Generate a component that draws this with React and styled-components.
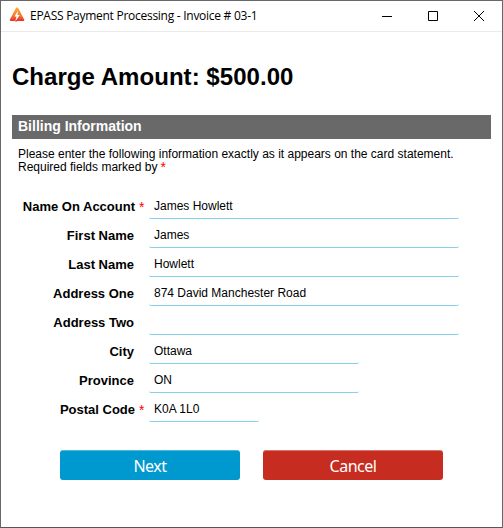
import React from "react";
import styled, { createGlobalStyle } from "styled-components";

const GlobalStyle = createGlobalStyle`
  * { box-sizing: border-box; }
  body { margin: 0; background: #fff; }
`;

const Window = styled.div`
  width: 503px;
  height: 528px;
  background: #fff;
  border: 1px solid #68686b;
  border-bottom-color: #565659;
  font-family: "Liberation Sans", Arial, sans-serif;
  color: #000;
  overflow: hidden;
`;

const TitleBar = styled.header`
  display: flex;
  align-items: center;
  height: 31px;
  padding-left: 8px;
  border-bottom: 1px solid #ebebeb;
`;

const Logo = styled.svg`
  width: 16px;
  height: 16px;
  margin: 0 5px 2px 0;
  flex: none;
`;

const Title = styled.span`
  flex: 1;
  font: 12px/16px "Open Sans", sans-serif;
  letter-spacing: -0.27px;
  white-space: nowrap;
`;

const WindowButton = styled.button`
  display: flex;
  align-items: center;
  justify-content: center;
  width: 46px;
  height: 29px;
  padding: 0;
  border: 0;
  background: transparent;
  flex: none;
`;

const Glyph = styled.svg`
  width: 10px;
  height: 10px;
  margin-bottom: 1px;
  fill: none;
  stroke: #000;
`;

const Content = styled.main`
  padding: 30px 11px 0;
`;

const Amount = styled.h1`
  margin: 0;
  font-size: 24px;
  line-height: 30px;
  font-weight: 700;
  letter-spacing: 0.04px;
  white-space: nowrap;
`;

const SectionTitle = styled.h2`
  margin: 23px 0 0;
  padding-left: 6px;
  height: 24px;
  background: #696969;
  color: #fff;
  font-size: 14px;
  line-height: 23px;
  font-weight: 700;
`;

const Intro = styled.p`
  margin: 9px 0 0;
  padding-left: 6px;
  font-size: 12px;
  line-height: 13px;
  white-space: nowrap;
`;

const RequiredNote = styled.span`
  display: flex;
  align-items: flex-start;
  gap: 3px;
  height: 13px;
`;

const Star = styled.span`
  color: #f00;
  font-size: 14px;
  line-height: 13px;
`;

const Form = styled.div`
  display: flex;
  flex-direction: column;
  gap: 5px;
  margin-top: 21px;
`;

const Row = styled.div`
  display: flex;
  height: 24px;
`;

const Label = styled.label`
  width: ${(p) => (p.$required ? "123px" : "122px")};
  font-size: 13px;
  line-height: 24px;
  font-weight: 700;
  text-align: right;
  white-space: nowrap;
`;

const Marker = styled.span`
  width: ${(p) => (p.$required ? "14px" : "15px")};
  padding-left: 4px;
  color: #f00;
  font-size: 14px;
  line-height: 24px;
`;

const Input = styled.input`
  width: ${(p) => p.$width}px;
  height: 24px;
  padding: 0 5px 2px;
  border: 0;
  border-bottom: 1px solid #84d2e8;
  border-radius: 2px;
  background: transparent;
  color: #000;
  outline: none;
  font: 12px "Liberation Sans", Arial, sans-serif;
`;

const Actions = styled.div`
  display: flex;
  gap: 23px;
  margin: 28px 0 0 48px;
`;

const ActionButton = styled.button`
  width: 180px;
  height: 30px;
  padding: 0;
  border: 0;
  border-top: 1px solid ${(p) => p.$edge};
  border-radius: 3px;
  background: ${(p) => p.$color};
  color: #fff;
  font: 16px/30px "Noto Sans", sans-serif;
  letter-spacing: -0.5px;
`;

const fields = [
  { label: "Name On Account", value: "James Howlett", width: 310, required: true },
  { label: "First Name", value: "James", width: 310 },
  { label: "Last Name", value: "Howlett", width: 310 },
  { label: "Address One", value: "874 David Manchester Road", width: 310 },
  { label: "Address Two", value: "", width: 310 },
  { label: "City", value: "Ottawa", width: 210 },
  { label: "Province", value: "ON", width: 210 },
  { label: "Postal Code", value: "K0A 1L0", width: 110, required: true },
];

export default function App() {
  return (
    <>
      <GlobalStyle />
      <Window>
        <TitleBar>
          <Logo viewBox="0 0 16 16">
            <defs>
              <linearGradient id="flame" x1="0" y1="0" x2="0" y2="1">
                <stop offset="0" stopColor="#fbb32c" />
                <stop offset="0.55" stopColor="#f57a32" />
                <stop offset="1" stopColor="#e5222c" />
              </linearGradient>
            </defs>
            <path d="M7.8 0.3 L9.4 1.2 L15.4 12.9 L14.7 14 H8.6 L6.2 15 L6.6 14 H1.4 L0.7 12.9 L6.8 1.2 Z" fill="url(#flame)" />
            <path d="M9.1 3.6 L5.5 9.5 H7.5 L6.3 14.6 L10.7 8.1 H8.4 Z" fill="#fff" />
          </Logo>
          <Title>EPASS Payment Processing - Invoice # 03-1</Title>
          <WindowButton aria-label="Minimize">
            <Glyph viewBox="0 0 10 10"><path d="M0 5.5H10" /></Glyph>
          </WindowButton>
          <WindowButton aria-label="Maximize">
            <Glyph viewBox="0 0 10 10"><path d="M.5 .5h9v9h-9z" /></Glyph>
          </WindowButton>
          <WindowButton aria-label="Close">
            <Glyph viewBox="0 0 10 10"><path d="M0 0L10 10M10 0L0 10" /></Glyph>
          </WindowButton>
        </TitleBar>
        <Content>
          <Amount>Charge Amount: $500.00</Amount>
          <SectionTitle>Billing Information</SectionTitle>
          <Intro>
            Please enter the following information exactly as it appears on the card statement.
            <RequiredNote>
              Required fields marked by <Star>*</Star>
            </RequiredNote>
          </Intro>
          <Form>
            {fields.map((f) => (
              <Row key={f.label}>
                <Label $required={f.required}>{f.label}</Label>
                <Marker $required={f.required}>{f.required ? "*" : ""}</Marker>
                <Input aria-label={f.label} defaultValue={f.value} $width={f.width} />
              </Row>
            ))}
          </Form>
          <Actions>
            <ActionButton $color="#0099cf" $edge="#4db8dd">Next</ActionButton>
            <ActionButton $color="#c62d20" $edge="#d8766d">Cancel</ActionButton>
          </Actions>
        </Content>
      </Window>
    </>
  );
}
